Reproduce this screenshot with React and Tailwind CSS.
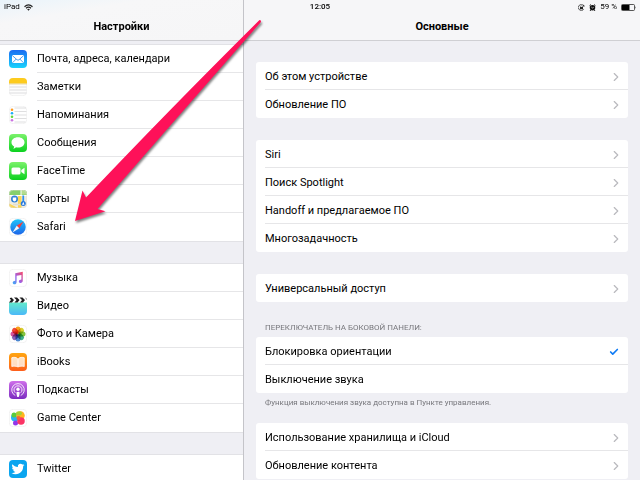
import { Check, ChevronRight } from "lucide-react";

function MailIcon() {
  return (
    <svg viewBox="0 0 36 36" className="size-[18px] shrink-0">
      <defs>
        <linearGradient id="mail" x1="0" y1="0" x2="0" y2="1">
          <stop offset="0" stopColor="#1b6cf2" />
          <stop offset="1" stopColor="#19d3fd" />
        </linearGradient>
      </defs>
      <rect width="36" height="36" rx="8" fill="url(#mail)" />
      <rect x="6" y="10" width="24" height="16" rx="2" fill="#fff" />
      <path d="M6.5 11 L16 19.5 Q18 21 20 19.5 L29.5 11 M7 25.5 L14.5 18 M29 25.5 L21.5 18" fill="none" stroke="#3d95ee" strokeWidth="1.8" />
    </svg>
  );
}

function NotesIcon() {
  return (
    <svg viewBox="0 0 36 36" className="size-[18px] shrink-0">
      <rect x=".5" y=".5" width="35" height="35" rx="8" fill="#fdfdfd" stroke="#e4e4e4" />
      <path d="M0 11 V8 Q0 0 8 0 H28 Q36 0 36 8 V11 Z" fill="#fdcb1e" />
      <path d="M0 12 H36" stroke="#d9b44a" strokeWidth="1" />
      <path d="M1 18 H35 M1 24 H35 M1 30 H35" stroke="#d2d2d4" strokeWidth="1.5" />
    </svg>
  );
}

function RemindersIcon() {
  return (
    <svg viewBox="0 0 36 36" className="size-[18px] shrink-0">
      <rect x=".5" y=".5" width="35" height="35" rx="8" fill="#fff" stroke="#e4e4e4" />
      <path d="M11 4 H34 M11 11 H35 M11 18 H35 M11 25 H35 M11 32 H33" stroke="#d4d4d6" strokeWidth="1.5" />
      <circle cx="6" cy="7.5" r="2.6" fill="#ff9a1f" />
      <circle cx="6" cy="14.5" r="2.6" fill="#1badf8" />
      <circle cx="6" cy="21.5" r="2.6" fill="#62d93c" />
      <circle cx="6" cy="28.5" r="2.6" fill="#cc73e1" />
    </svg>
  );
}

function MessagesIcon() {
  return (
    <svg viewBox="0 0 36 36" className="size-[18px] shrink-0">
      <defs>
        <linearGradient id="green" x1="0" y1="0" x2="0" y2="1">
          <stop offset="0" stopColor="#7bf26b" />
          <stop offset="1" stopColor="#0bd11f" />
        </linearGradient>
      </defs>
      <rect width="36" height="36" rx="8" fill="url(#green)" />
      <path d="M18 6.5 C25.5 6.5 31 11 31 16.8 C31 22.6 25.5 27 18 27 C16.5 27 15.2 26.9 14 26.5 C12.5 28 10.5 29 8.5 29 C9.8 27.8 10.5 26.5 10.3 25 C7 23.2 5 20.3 5 16.8 C5 11 10.5 6.5 18 6.5 Z" fill="#fff" />
    </svg>
  );
}

function FaceTimeIcon() {
  return (
    <svg viewBox="0 0 36 36" className="size-[18px] shrink-0">
      <rect width="36" height="36" rx="8" fill="url(#green)" />
      <rect x="5" y="11" width="18" height="14" rx="3" fill="#fff" />
      <path d="M24.5 16 L31 11.5 V24.5 L24.5 20 Z" fill="#fff" />
    </svg>
  );
}

function MapsIcon() {
  return (
    <svg viewBox="0 0 36 36" className="size-[18px] shrink-0">
      <defs>
        <clipPath id="mapsClip">
          <rect width="36" height="36" rx="8" />
        </clipPath>
      </defs>
      <g clipPath="url(#mapsClip)">
        <rect width="36" height="36" fill="#f1ece0" />
        <path d="M0 0 H36 V10 H0 Z" fill="#86cf6b" />
        <path d="M24 0 H36 V9 H24 Z" fill="#b4dc8f" />
        <path d="M18 12 H25 V36 H18 Z" fill="#fbd555" />
        <path d="M0 27 L18 36 H0 Z" fill="#fbd555" />
        <path d="M0 11 H36 M24 0 V10" stroke="#fff" strokeWidth="2" />
        <circle cx="11" cy="18" r="7" fill="#2f80d6" />
        <path d="M7.5 15 H14.5 V19 Q14.5 21.5 11 23 Q7.5 21.5 7.5 19 Z" fill="#fff" />
        <path d="M8 29 L22 29" fill="none" stroke="#e4dfcf" strokeWidth="3" />
        <path d="M28.500 11 V26" fill="none" stroke="#2c8ff0" strokeWidth="3.500" />
        <circle cx="28.500" cy="27" r="5" fill="#2477dc" />
        <path d="M28.500 23.500 L31 29.500 H26 Z" fill="#fff" />
      </g>
      <rect x=".5" y=".5" width="35" height="35" rx="8" fill="none" stroke="#dcdcd4" />
    </svg>
  );
}

function SafariIcon() {
  return (
    <svg viewBox="0 0 36 36" className="size-[18px] shrink-0">
      <defs>
        <linearGradient id="compass" x1="0" y1="0" x2="0" y2="1">
          <stop offset="0" stopColor="#1fc4fa" />
          <stop offset="1" stopColor="#1d65e8" />
        </linearGradient>
      </defs>
      <rect x=".5" y=".5" width="35" height="35" rx="8" fill="#fff" stroke="#e4e4e4" />
      <circle cx="18" cy="18" r="15.5" fill="url(#compass)" />
      <path d="M29 7 L20.5 20.5 L15.5 15.5 Z" fill="#fb3b37" />
      <path d="M7 29 L15.5 15.5 L20.5 20.5 Z" fill="#f3f6fa" />
    </svg>
  );
}

function MusicIcon() {
  return (
    <svg viewBox="0 0 36 36" className="size-[18px] shrink-0">
      <defs>
        <linearGradient id="music" x1="0" y1="1" x2="1" y2="0">
          <stop offset="0" stopColor="#2fb0f5" />
          <stop offset=".45" stopColor="#9a62ea" />
          <stop offset="1" stopColor="#fb4763" />
        </linearGradient>
      </defs>
      <rect x=".5" y=".5" width="35" height="35" rx="8" fill="#fff" stroke="#e4e4e4" />
      <path d="M12.5 8.5 L27.5 5.5 V23.5 C27.5 26 25.5 28 23.2 28 C21 28 19.7 26.8 19.7 25 C19.7 22.3 22.5 21.5 24.8 21.2 V11.8 L15.2 13.7 V26 C15.2 28.7 13.2 30.6 11 30.6 C8.8 30.6 7.4 29.4 7.4 27.6 C7.4 25 10 24.1 12.5 23.7 Z" fill="url(#music)" />
    </svg>
  );
}

function VideoIcon() {
  return (
    <svg viewBox="0 0 36 36" className="size-[18px] shrink-0">
      <defs>
        <linearGradient id="video" x1="0" y1="0" x2="0" y2="1">
          <stop offset="0" stopColor="#63eacb" />
          <stop offset="1" stopColor="#4ab8f8" />
        </linearGradient>
        <clipPath id="videoClip">
          <rect width="36" height="36" rx="8" />
        </clipPath>
      </defs>
      <g clipPath="url(#videoClip)">
        <rect width="36" height="36" fill="#fff" />
        <rect y="11" width="36" height="25" fill="url(#video)" />
        <path d="M0 1 H5 L10 6 L6 11 H0 L4 6 Z M10 1 H16 L21 6 L17 11 H11 L15 6 Z M21 1 H27 L32 6 L28 11 H22 L26 6 Z M32 1 H36 V6 Z" fill="#1d1d1f" />
      </g>
    </svg>
  );
}

const petals = ["#f9a11b", "#d8d02b", "#85c341", "#3fae8a", "#4b86cf", "#8c63b5", "#d6559b", "#ee4b3a"];

function PhotosIcon() {
  return (
    <svg viewBox="0 0 36 36" className="size-[18px] shrink-0">
      <rect x=".5" y=".5" width="35" height="35" rx="8" fill="#fff" stroke="#e4e4e4" />
      {petals.map((color, i) => (
        <rect
          key={color}
          x="13"
          y="3"
          width="10"
          height="14.5"
          rx="5"
          fill={color}
          className="mix-blend-multiply"
          transform={`rotate(${i * 45} 18 18)`}
        />
      ))}
    </svg>
  );
}

function BooksIcon() {
  return (
    <svg viewBox="0 0 36 36" className="size-[18px] shrink-0">
      <defs>
        <linearGradient id="books" x1="0" y1="0" x2="0" y2="1">
          <stop offset="0" stopColor="#ffa610" />
          <stop offset="1" stopColor="#fd5e1c" />
        </linearGradient>
      </defs>
      <rect width="36" height="36" rx="8" fill="url(#books)" />
      <path
        d="M17 11 C15 8.5 9 8 5.5 9.5 V27 C9 26 15 26 17 28 Z M19 11 C21 8.500 27 8 30.500 9.500 V27 C27 26 21 26 19 28 Z"
        fill="#fff"
        fillOpacity=".75"
        stroke="#fff"
        strokeWidth="1.5"
      />
    </svg>
  );
}

function PodcastsIcon() {
  return (
    <svg viewBox="0 0 36 36" className="size-[18px] shrink-0">
      <defs>
        <linearGradient id="podcasts" x1="0" y1="0" x2="0" y2="1">
          <stop offset="0" stopColor="#cf70ea" />
          <stop offset="1" stopColor="#7c2cc0" />
        </linearGradient>
      </defs>
      <rect width="36" height="36" rx="8" fill="url(#podcasts)" />
      <g fill="none" stroke="#fff" strokeWidth="1.7">
        <path d="M12.5 29 A12.5 12.5 0 1 1 23.5 29" />
        <path d="M12.5 23.5 A8 8 0 1 1 23.5 23.5" />
      </g>
      <circle cx="18" cy="16.5" r="3.3" fill="#fff" />
      <path d="M14.5 23 Q18 19.5 21.5 23 L20 31 Q18 33 16 31 Z" fill="#fff" />
    </svg>
  );
}

function GameCenterIcon() {
  return (
    <svg viewBox="0 0 36 36" className="size-[18px] shrink-0">
      <rect x=".5" y=".5" width="35" height="35" rx="8" fill="#fff" stroke="#e4e4e4" />
      <circle cx="12" cy="17" r="8" fill="#26b3f5" />
      <circle cx="10" cy="12" r="5" fill="#5bcb3c" />
      <circle cx="23" cy="13" r="8.5" fill="#ffb41c" />
      <ellipse cx="20" cy="8.5" rx="6" ry="4" fill="#a6cf32" />
      <circle cx="13" cy="28" r="5" fill="#9336e8" />
      <circle cx="24" cy="24" r="7.5" fill="#fb3465" />
      <circle cx="19" cy="18" r="4" fill="#f2643c" />
    </svg>
  );
}

function TwitterIcon() {
  return (
    <svg viewBox="0 0 36 36" className="size-[18px] shrink-0">
      <rect width="36" height="36" rx="8" fill="#0aa5ef" />
      <path
        transform="translate(5 5) scale(1.08)"
        d="M23.953 4.57a10 10 0 0 1-2.825.775 4.958 4.958 0 0 0 2.163-2.723c-.951.555-2.005.959-3.127 1.184a4.92 4.92 0 0 0-8.384 4.482C7.69 8.095 4.067 6.13 1.64 3.162a4.822 4.822 0 0 0-.666 2.475c0 1.71.87 3.213 2.188 4.096a4.904 4.904 0 0 1-2.228-.616v.06a4.923 4.923 0 0 0 3.946 4.827 4.996 4.996 0 0 1-2.212.085 4.936 4.936 0 0 0 4.604 3.417 9.867 9.867 0 0 1-6.102 2.105c-.39 0-.779-.023-1.17-.067a13.995 13.995 0 0 0 7.557 2.209c9.053 0 13.998-7.496 13.998-13.985 0-.21 0-.42-.015-.63A9.935 9.935 0 0 0 24 4.59z"
        fill="#fff"
      />
    </svg>
  );
}

const appGroups = [
  [
    { name: "Почта, адреса, календари", Icon: MailIcon },
    { name: "Заметки", Icon: NotesIcon },
    { name: "Напоминания", Icon: RemindersIcon },
    { name: "Сообщения", Icon: MessagesIcon },
    { name: "FaceTime", Icon: FaceTimeIcon },
    { name: "Карты", Icon: MapsIcon },
    { name: "Safari", Icon: SafariIcon },
  ],
  [
    { name: "Музыка", Icon: MusicIcon },
    { name: "Видео", Icon: VideoIcon },
    { name: "Фото и Камера", Icon: PhotosIcon },
    { name: "iBooks", Icon: BooksIcon },
    { name: "Подкасты", Icon: PodcastsIcon },
    { name: "Game Center", Icon: GameCenterIcon },
  ],
  [{ name: "Twitter", Icon: TwitterIcon }],
];

function StatusBar() {
  return (
    <div className="absolute inset-x-0 top-0 z-10 grid h-[14px] grid-cols-3 items-center px-1 text-[8px] leading-3 text-black">
      <div className="flex items-center gap-1">
        <span>iPad</span>
        <svg viewBox="0 0 18 14" className="h-[7px] w-[9px]">
          <path d="M1 5.5 Q9 -2 17 5.5 M4 8.5 Q9 4 14 8.5" fill="none" stroke="#222" strokeWidth="2.200" />
          <path d="M6.300 10.500 Q9 8.500 11.700 10.500 L9 13.500 Z" fill="#222" />
        </svg>
      </div>
      <time className="text-center font-medium">12:05</time>
      <div className="flex items-center justify-end gap-1">
        <svg viewBox="0 0 14 14" className="size-[7px]">
          <path d="M11.5 3.5 A6 6 0 1 0 11.5 10.5" fill="none" stroke="#222" strokeWidth="1.5" />
          <path d="M9.5 5 L13.5 5 L11.5 1 Z" fill="#222" />
          <rect x="4" y="6" width="6" height="4.5" fill="#222" />
          <path d="M5 6.5 V5 Q7 2 9 5 V6.5" fill="none" stroke="#222" />
        </svg>
        <svg viewBox="0 0 14 14" className="size-[7px]">
          <circle cx="7" cy="7.5" r="5.5" fill="#111" />
          <path d="M1 3.5 L4 1 M13 3.5 L10 1 M3.5 12 L2 14 M10.5 12 L12 14" stroke="#111" strokeWidth="1.8" />
          <path d="M4.5 6 L7 8 L9.5 6.5" fill="none" stroke="#fff" strokeWidth="1.2" />
        </svg>
        <span>59 %</span>
        <svg viewBox="0 0 30 14" className="h-[7px] w-[15px]">
          <rect x="1" y="1" width="26" height="12" rx="2" fill="none" stroke="#222" strokeWidth="1.5" />
          <rect x="2" y="2" width="15" height="10" fill="#000" />
          <path d="M28 4.5 Q30 7 28 9.5 Z" fill="#222" />
        </svg>
      </div>
    </div>
  );
}

function Row({ children }) {
  return (
    <li className="group pl-[9px]">
      <button
        type="button"
        className="flex h-7 w-full items-center justify-between border-b border-[#e6e6e8] pt-[2px] pr-[5px] text-left group-last:border-b-0"
      >
        {children}
        <ChevronRight className="size-[14px] text-[#b9b9be]" strokeWidth={2} />
      </button>
    </li>
  );
}

function Card({ items }) {
  return (
    <ul className="rounded-[3px] bg-white">
      {items.map((item) => (
        <Row key={item}>{item}</Row>
      ))}
    </ul>
  );
}

function SwitchOption({ label, defaultChecked }) {
  return (
    <label className="group block pl-[9px]">
      <span className="flex h-7 items-center justify-between border-b border-[#e6e6e8] pt-[2px] pr-[9px] group-last:border-b-0">
        {label}
        <input type="radio" name="side-switch" defaultChecked={defaultChecked} className="peer sr-only" />
        <Check className="invisible size-[10px] text-[#0f7bf5] peer-checked:visible" strokeWidth={4} />
      </span>
    </label>
  );
}

function PointerArrow() {
  return (
    <svg
      viewBox="0 0 200 220"
      className="pointer-events-none absolute top-[10px] left-[70px] z-20 h-[220px] w-[200px] drop-shadow-[1px_2px_1px_rgba(0,0,0,0.5)]"
    >
      <path
        d="M189.5 10 Q191.5 10 191 12 Q112 102 27.5 199 L35.5 201.3 L5 211 L12.5 180.5 L16 187.5 Q96 103 189.5 10 Z"
        fill="#fe1159"
      />
    </svg>
  );
}

export default function App() {
  return (
    <div className="relative grid h-screen grid-cols-[244px_1fr] overflow-hidden bg-[#efeff4] font-['Roboto',sans-serif] text-[11px] leading-4 text-black">
      <StatusBar />

      <aside className="overflow-hidden border-r border-[#c4c4c9]">
        <header className="flex h-[41px] items-end justify-center border-b border-[#cfcfd3] bg-linear-to-br from-[#e9f4fb] via-[#f7f7f8] via-30% to-[#f6f6f7] pb-[5px]">
          <h1 className="font-bold">Настройки</h1>
        </header>
        <nav className="mt-1 flex flex-col gap-[23px]">
          {appGroups.map((group) => (
            <ul key={group[0].name} className="bg-white shadow-[0_0_0_1px_#e2e2e6]">
              {group.map(({ name, Icon }) => (
                <li key={name} className="group">
                  <button type="button" className="flex h-7 w-full items-center gap-[10px] pl-[9px] text-left">
                    <Icon />
                    <span className="flex h-full flex-1 items-center border-b border-[#e6e6e8] group-last:border-b-0">
                      {name}
                    </span>
                  </button>
                </li>
              ))}
            </ul>
          ))}
        </nav>
      </aside>

      <main className="overflow-hidden">
        <header className="flex h-[41px] items-end justify-center border-b border-[#cfcfd3] bg-[#f6f6f8] pb-[5px]">
          <h2 className="font-bold">Основные</h2>
        </header>
        <div className="flex flex-col gap-[22px] px-3 py-[21px]">
          <Card items={["Об этом устройстве", "Обновление ПО"]} />
          <Card items={["Siri", "Поиск Spotlight", "Handoff и предлагаемое ПО", "Многозадачность"]} />
          <Card items={["Универсальный доступ"]} />
          <fieldset className="-mt-1">
            <legend className="px-[9px] pb-[1px] text-[8px] text-[#77777c] uppercase">
              Переключатель на боковой панели:
            </legend>
            <div className="rounded-[3px] bg-white">
              <SwitchOption label="Блокировка ориентации" defaultChecked />
              <SwitchOption label="Выключение звука" />
            </div>
            <p className="-mb-[10px] px-[9px] pt-[2px] text-[8px] text-[#77777c]">
              Функция выключения звука доступна в Пункте управления.
            </p>
          </fieldset>
          <Card items={["Использование хранилища и iCloud", "Обновление контента"]} />
        </div>
      </main>

      <PointerArrow />
    </div>
  );
}
